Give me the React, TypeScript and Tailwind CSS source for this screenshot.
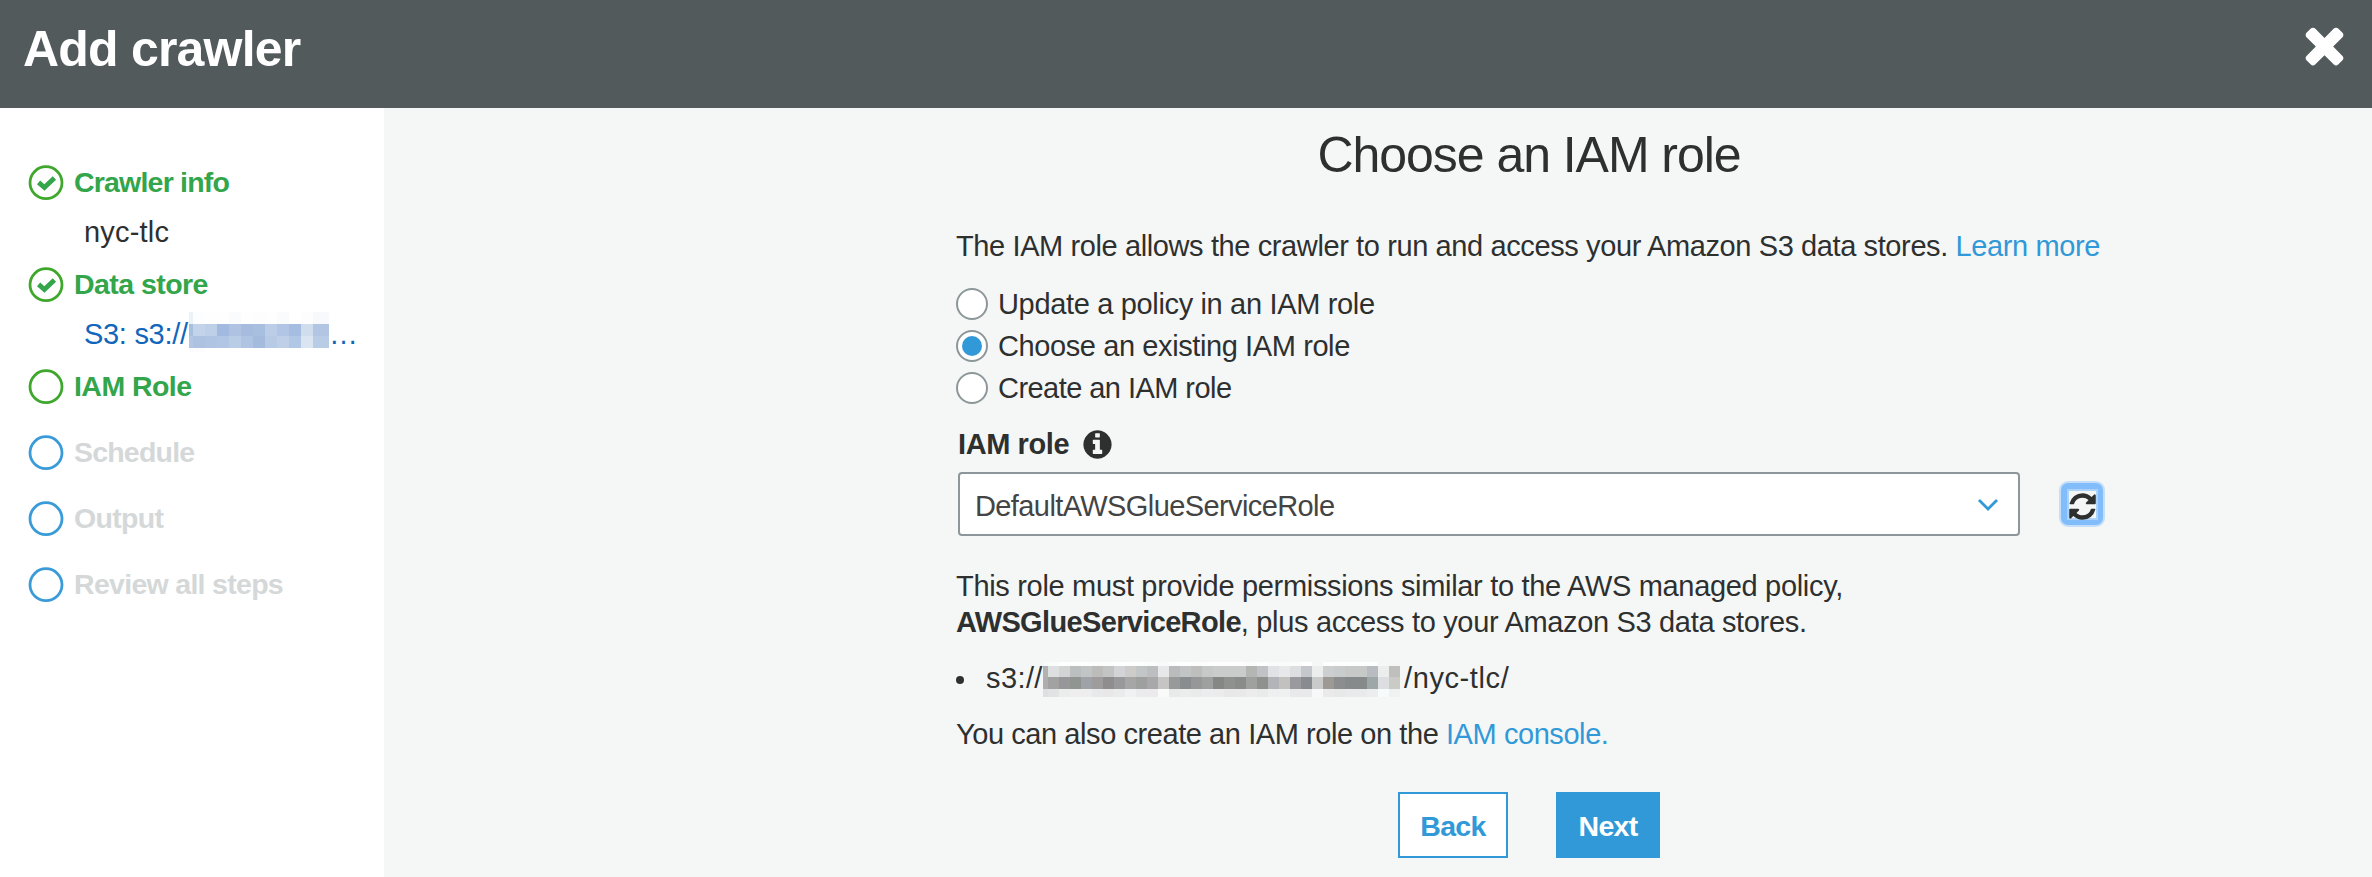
import React from "react";

const CLOSE_PATH =
  "M1490 1322q0 40-28 68l-136 136q-28 28-68 28t-68-28l-294-294-294 294q-28 28-68 28t-68-28l-136-136q-28-28-28-68t28-68l294-294-294-294q-28-28-28-68t28-68l136-136q28-28 68-28t68 28l294 294 294-294q28-28 68-28t68 28l136 136q28 28 28 68t-28 68l-294 294 294 294q28 28 28 68z";
const INFO_PATH =
  "M1152 1376v-160q0-14-9-23t-23-9h-96v-512q0-14-9-23t-23-9h-320q-14 0-23 9t-9 23v160q0 14 9 23t23 9h96v320h-96q-14 0-23 9t-9 23v160q0 14 9 23t23 9h448q14 0 23-9t9-23zm-128-896v-160q0-14-9-23t-23-9h-192q-14 0-23 9t-9 23v160q0 14 9 23t23 9h192q14 0 23-9t9-23zm640 416q0 209-103 385.5t-279.5 279.5-385.5 103-385.5-103-279.5-279.5-103-385.5 103-385.5 279.5-279.5 385.5-103 385.5 103 279.5 279.5 103 385.5z";
const REFRESH_PATH =
  "M1639 1056q0 5-1 7-64 268-268 434.5t-478 166.5q-146 0-282.5-55t-243.5-157l-129 129q-19 19-45 19t-45-19-19-45v-448q0-26 19-45t45-19h448q26 0 45 19t19 45-19 45l-137 137q71 66 161 102t187 36q134 0 250-65t186-179q11-17 53-117 8-23 30-23h192q13 0 22.5 9.5t9.5 22.5zm25-800v448q0 26-19 45t-45 19h-448q-26 0-45-19t-19-45 19-45l138-138q-148-137-349-137-134 0-250 65t-186 179q-11 17-53 117-8 23-30 23h-199q-13 0-22.5-9.5t-9.5-22.5v-7q65-268 270-434.5t480-166.5q146 0 284 55.5t245 156.5l130-129q19-19 45-19t45 19 19 45z";

function StepIcon({ color, checked }: { color: string; checked?: boolean }) {
  return (
    <svg className="size-9 shrink-0" viewBox="0 0 36 36" fill="none">
      <circle cx="18" cy="17.7" r="16" stroke={color} strokeWidth="2.8" />
      {checked && <path d="M10.6 17.4l5.8 5.2 10-9.6" stroke="#33a54a" strokeWidth="4.8" />}
    </svg>
  );
}

type StepProps = { label: string; icon: string; text: string; checked?: boolean; children?: React.ReactNode };

function Step({ label, icon, text, checked, children }: StepProps) {
  return (
    <li className={children ? "h-[102px]" : "h-[66px]"}>
      <div className="flex h-9 items-center gap-[10px]">
        <StepIcon color={icon} checked={checked} />
        <span className={`whitespace-nowrap pb-0.5 text-[28.5px] font-bold ${text}`}>{label}</span>
      </div>
      {children && <div className="ml-[56px] mt-[14px] flex h-9 items-center whitespace-nowrap">{children}</div>}
    </li>
  );
}

type MosaicProps = { rows: string[][]; heights: number[]; widths: number[]; className: string };

function Mosaic({ rows, heights, widths, className }: MosaicProps) {
  return (
    <span className={`flex shrink-0 flex-col ${className}`}>
      {rows.map((row, r) => (
        <span key={r} className="flex" style={{ height: heights[r] }}>
          {row.map((c, i) => (
            <span key={i} className="shrink-0" style={{ width: widths[i], background: c }} />
          ))}
        </span>
      ))}
    </span>
  );
}

const BLUE_ROWS = [
  "edf2f8 fcfdfe fefefe fefefe fafbfd fefefe fdfdfe fefefe fafbfd ffffff fdfdfe f8f9fc",
  "a9bfe0 c3d3ea becfe8 a2badf afc2e1 a6bbde a9bfe0 bbcde7 b3c5e4 a5bde0 d0dded b2c5e3",
  "b3c6e4 adc1e1 afc4e3 b1c6e4 bacde7 afc3e2 a5bbdd b8cbe6 bfcfe8 b0c7e5 dbe5f2 b9cce5",
  "fafbfd fcfcfe ffffff ffffff fefeff fefefe fefefe ffffff fefeff fefeff ffffff fefefe",
].map((r) => r.split(" ").map((c) => "#" + c));
const BLUE_W = [4, 12, 12, 12, 12, 12, 12, 12, 12, 12, 12, 16];

const GRAY_ROWS = [
  "f8f9f9 fafcfc fdfefe fdfdfd fcfdfd fbfcfc fcfcfd fdfefe fcfdfd fcfdfd fbfcfc f8f9fa fcfdfd fdfefe fcfcfc fdfdfd fdfdfd fdfdfd fdfdfd f9faf9 fcfdfd f9fafb f9fafa fafbfb ffffff f5f7f7 fdfefe fdfdfd fcfdfd fcfdfd f5f7f7 f5f7f7",
  "b3b1b2 dedfe1 d3d4d4 bcbfbf c1c5c6 bcbcbb c3c5c5 d2d4d7 cdcccb c3c6c6 bdbebf e6e8ea b9bcba c2c5c6 bebfbc c7c9c8 cacccc cacccb cacccc b3b6b2 c0c2c5 e0e2e6 e7e8ea dcdee0 c4c7cb eceeee cccecf c9cccd c7c9c8 b8bcc1 eceeee bfbfbd",
  "b0adae a3a2a3 979799 919592 9fa3a7 9e9c9d 8f8d8d 99989a a7a6a7 9da09f a8a8ab c6c5c3 979a98 898d8f 969797 9da09e 858785 8f918f 898c8a 9fa19e 8f918f b3b4ba c3c0c0 9a999d 888c91 c9cbca 9d9995 8b8d8f 868a8b 9da7a8 dddee1 cacbc6",
  "dedfe1 e2e3e4 ebecec eeeeef eeeeee e8e9ea e8e8e9 eaebeb f0f1f2 ebeaec eceaec f9fbfa e8e9e9 ebecec e9eaea ecedee ececed e8e8e9 e9e9ea ececed e9eaea eeeff0 eff0f0 e9e9eb e7e9eb f7f8f9 eaeaea e7e9e9 e9eaeb ecedee f8fbfc f0f2f2",
].map((r) => r.split(" ").map((c) => "#" + c));
const GRAY_W = [5, ...Array<number>(27).fill(11), 22, 11, 11, 11];

function Radio({ label, checked, tracking }: { label: string; checked?: boolean; tracking: string }) {
  return (
    <label className="flex h-[42px] items-center gap-[10px]">
      <span className="flex size-8 items-center justify-center rounded-full border-2 border-[#8d9799] bg-white">
        {checked && <span className="size-5 rounded-full bg-[#3199d7]" />}
      </span>
      <span className={tracking}>{label}</span>
    </label>
  );
}

export default function App() {
  return (
    <div className="flex h-[877px] w-[2372px] flex-col overflow-hidden bg-[#f5f7f7] font-['Liberation_Sans',Arial,sans-serif] text-[29px] leading-9 text-[#2e3030]">
      <header className="flex h-[108px] shrink-0 items-start justify-between bg-[#525a5c] pl-[23px] pr-[19px] pt-[17px]">
        <h1 className="text-[50px] font-bold leading-[64px] tracking-[-0.8px] text-white">Add crawler</h1>
        <svg className="-mt-px size-[57px]" viewBox="0 0 1792 1792" fill="#fff">
          <path d={CLOSE_PATH} />
        </svg>
      </header>
      <div className="flex flex-1">
        <aside className="w-[384px] shrink-0 bg-white pl-7 pt-[57px]">
          <ul>
            <Step label="Crawler info" icon="#3fa82c" text="tracking-[-0.8px] text-[#33a54a]" checked>
              <span className="pb-0.5 tracking-[0.2px]">nyc-tlc</span>
            </Step>
            <Step label="Data store" icon="#3fa82c" text="tracking-[-0.55px] text-[#33a54a]" checked>
              <span className="w-[105px] pb-0.5 tracking-[-0.3px] text-[#1166bb]">S3: s3://</span>
              <Mosaic className="-mt-[6px]" rows={BLUE_ROWS} heights={[12, 12, 12, 4]} widths={BLUE_W} />
              <span className="pb-0.5 text-[#1166bb]">…</span>
            </Step>
            <Step label="IAM Role" icon="#3fa82c" text="tracking-[-0.55px] text-[#33a54a]" />
            <Step label="Schedule" icon="#3a9bd9" text="tracking-[-0.8px] text-[#d5d8d8]" />
            <Step label="Output" icon="#3a9bd9" text="tracking-[-0.7px] text-[#d5d8d8]" />
            <Step label="Review all steps" icon="#3a9bd9" text="tracking-[-0.7px] text-[#d5d8d8]" />
          </ul>
        </aside>
        <main className="flex-1 pl-[572px]">
          <h2 className="mt-[19px] w-[1146px] text-center text-[50px] leading-[56px] tracking-[-1.05px]">
            Choose an IAM role
          </h2>
          <p className="mt-[45px] whitespace-nowrap tracking-[-0.39px]">
            The IAM role allows the crawler to run and access your Amazon S3 data stores.{" "}
            <a className="text-[#3199d7]">Learn more</a>
          </p>
          <div className="mt-[19px]">
            <Radio label="Update a policy in an IAM role" tracking="tracking-[-0.34px]" />
            <Radio label="Choose an existing IAM role" tracking="tracking-[-0.4px]" checked />
            <Radio label="Create an IAM role" tracking="tracking-[-0.55px]" />
          </div>
          <div className="ml-[2px] mt-[17px] flex h-9 items-center">
            <span className="w-[123px] font-bold tracking-[-0.4px]">IAM role</span>
            <svg className="size-[33px]" viewBox="0 0 1792 1792" fill="#2e3030">
              <path d={INFO_PATH} />
            </svg>
          </div>
          <div className="ml-[2px] mt-[10px] flex items-center">
            <div className="flex h-16 w-[1062px] items-center justify-between rounded-[4px] border-2 border-[#8d9799] bg-white pl-[15px] pr-[20px] text-[#444]">
              <span className="pt-[3px] tracking-[-0.6px]">DefaultAWSGlueServiceRole</span>
              <svg className="mt-[2px] h-3 w-[20px]" viewBox="0 0 20 12" fill="none">
                <path d="M1 1l9 9 9-9" stroke="#3199d7" strokeWidth="2.8" />
              </svg>
            </div>
            <button className="ml-[39px] flex size-[46px] items-center justify-center rounded-[9px] border-2 border-[#c6dff8] bg-[#82bdfb]">
              <span className="flex size-[27px] items-center justify-center bg-[#f4f6f6] ring-2 ring-[#add3fa]">
                <svg className="mt-[4px] size-[31px] shrink-0" viewBox="0 0 1792 1792" fill="#2e3030">
                  <path d={REFRESH_PATH} />
                </svg>
              </span>
            </button>
          </div>
          <p className="mt-[32px] whitespace-nowrap">
            <span className="tracking-[-0.32px]">
              This role must provide permissions similar to the AWS managed policy,
            </span>
            <br />
            <span className="tracking-[-0.33px]">
              <strong className="tracking-[-0.65px]">AWSGlueServiceRole</strong>, plus access to your Amazon S3 data
              stores.
            </span>
          </p>
          <div className="mt-[20px] flex h-9 items-center">
            <span className="mr-[22px] mt-[4px] size-2 rounded-full bg-[#2e3030]" />
            <span className="w-[57px] tracking-[0.4px]">s3://</span>
            <Mosaic className="mt-[3px]" rows={GRAY_ROWS} heights={[4, 11, 12, 8]} widths={GRAY_W} />
            <span className="ml-1 tracking-[0.6px]">/nyc-tlc/</span>
          </div>
          <p className="mt-[20px] tracking-[-0.43px]">
            You can also create an IAM role on the <a className="text-[#3199d7]">IAM console.</a>
          </p>
          <div className="ml-[442px] mt-[40px] flex gap-12 text-[28.5px] font-bold tracking-[-0.7px]">
            <button className="h-[66px] w-[110px] border-2 border-[#3199d7] bg-white pt-[2px] text-[#3199d7]">
              Back
            </button>
            <button className="h-[66px] w-[104px] bg-[#3199d7] pt-[2px] text-white">Next</button>
          </div>
        </main>
      </div>
    </div>
  );
}
